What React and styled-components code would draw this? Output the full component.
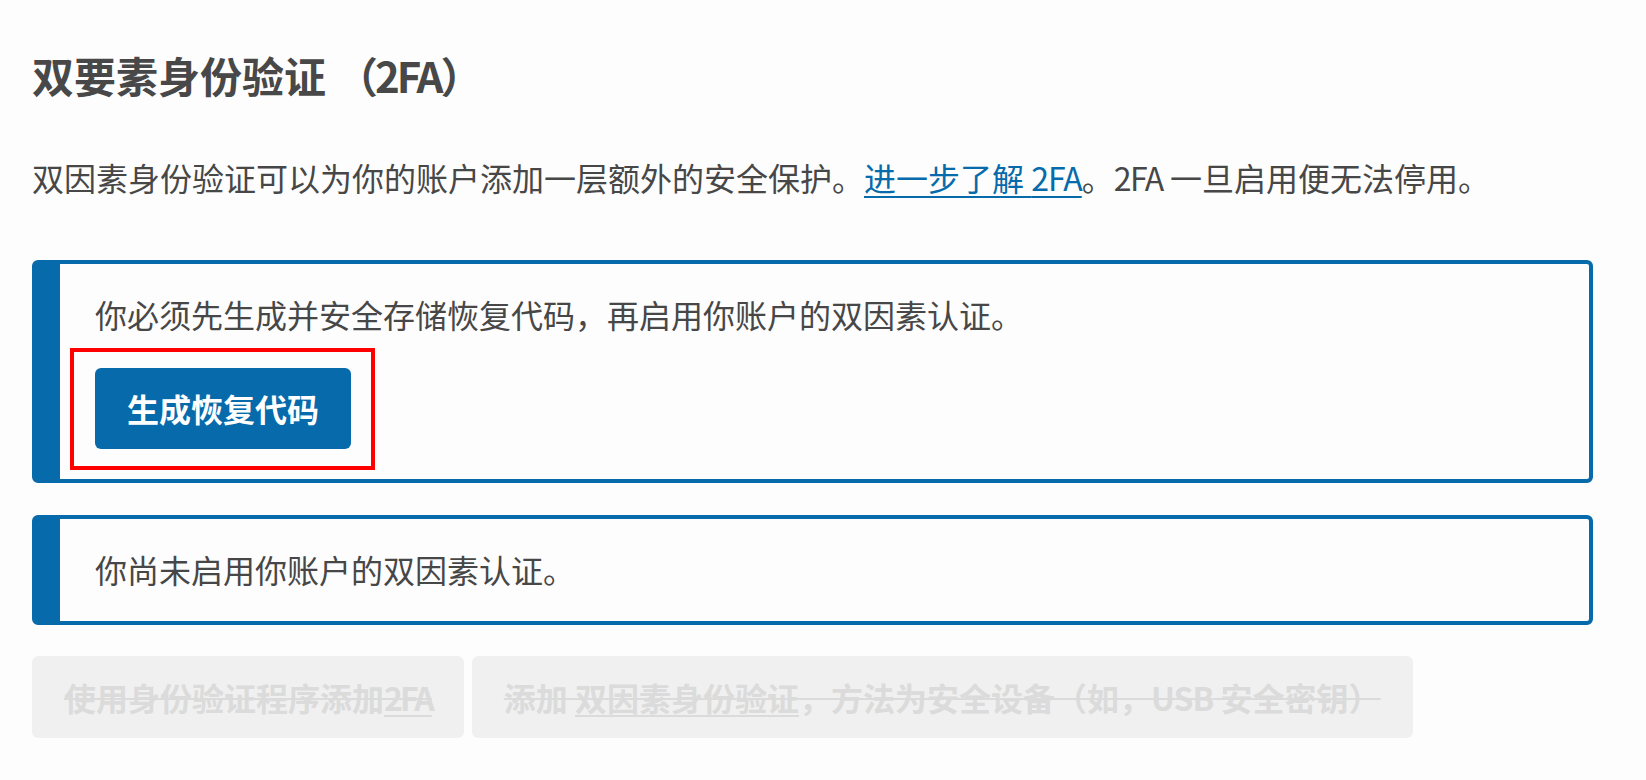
import React from 'react'
import styled, { createGlobalStyle } from 'styled-components'

const BLUE = '#066aab'
const TEXT = '#474747'

const GlobalStyle = createGlobalStyle`
  html, body {
    margin: 0;
    padding: 0;
    background: #fdfdfd;
  }
  body {
    font-family: "Noto Sans CJK SC", "Noto Sans", sans-serif;
    color: ${TEXT};
  }
`

const Page = styled.main`
  padding: 50px 53px 40px 32px;
`

const Title = styled.h2`
  margin: 0;
  font-size: 42px;
  line-height: 50px;
  font-weight: 700;
  color: #484848;
`

const TitleNote = styled.span`
  margin-left: 10px;
  letter-spacing: -3px;
`

const Intro = styled.p`
  margin: 53px 0 0;
  font-size: 32px;
  line-height: 48px;
`

const Latin = styled.span`
  letter-spacing: ${p => p.$tight || -1}px;
`

const Link = styled.a`
  color: ${BLUE};
  text-decoration: underline;
  text-decoration-thickness: 2px;
  text-underline-offset: 5px;
  cursor: pointer;
`

const Notice = styled.section`
  margin-top: ${p => p.$gap}px;
  border: 4px solid ${BLUE};
  border-left-width: 28px;
  border-radius: 6px;
  padding: 26px 35px 28px;
  font-size: 32px;
  line-height: 48px;
`

const NoticeText = styled.div``

const ButtonSlot = styled.div`
  margin: 30px 0 2px;
`

const Highlight = styled.span`
  position: relative;
  display: inline-block;
  &::after {
    content: '';
    position: absolute;
    top: -20px;
    bottom: -21px;
    left: -25px;
    right: -24px;
    border: 4px solid #ff0000;
    pointer-events: none;
  }
`

const PrimaryButton = styled.button`
  display: block;
  border: none;
  border-radius: 6px;
  background: ${BLUE};
  color: #fff;
  font-family: inherit;
  font-size: 32px;
  font-weight: 700;
  line-height: 49px;
  padding: 16px 32px;
  cursor: pointer;
`

const ActionRow = styled.div`
  display: flex;
  gap: 8px;
  margin-top: 31px;
`

const DisabledButton = styled.button`
  border: none;
  border-radius: 6px;
  background: #f0f0f0;
  color: #dbdbdb;
  font-family: inherit;
  font-size: 32px;
  font-weight: 700;
  line-height: 48px;
  padding: 17px 32px;
  text-decoration: line-through;
  text-decoration-thickness: 2px;
  white-space: nowrap;
  cursor: not-allowed;

  u {
    text-decoration: underline;
    text-decoration-thickness: 2px;
    text-underline-offset: 4px;
  }
`

const App = () => {
  return (
    <>
      <GlobalStyle />
      <Page>
        <Title>双要素身份验证<TitleNote>（2FA）</TitleNote></Title>
        <Intro>
          双因素身份验证可以为你的账户添加一层额外的安全保护。<Link>进一步了解 <Latin>2FA</Latin></Link>。<Latin $tight={-1.5}>2FA</Latin> 一旦启用便无法停用。
        </Intro>

        <Notice $gap={59}>
          <NoticeText>你必须先生成并安全存储恢复代码，再启用你账户的双因素认证。</NoticeText>
          <ButtonSlot>
            <Highlight>
              <PrimaryButton>生成恢复代码</PrimaryButton>
            </Highlight>
          </ButtonSlot>
        </Notice>

        <Notice $gap={32}>
          <NoticeText>你尚未启用你账户的双因素认证。</NoticeText>
        </Notice>

        <ActionRow>
          <DisabledButton disabled>使用身份验证程序添加<u><Latin $tight={-3}>2FA</Latin></u></DisabledButton>
          <DisabledButton disabled>添加 <u>双因素身份验证</u>，方法为安全设备（如，<Latin $tight={-1}>USB</Latin> 安全密钥）</DisabledButton>
        </ActionRow>
      </Page>
    </>
  )
}

export default App
